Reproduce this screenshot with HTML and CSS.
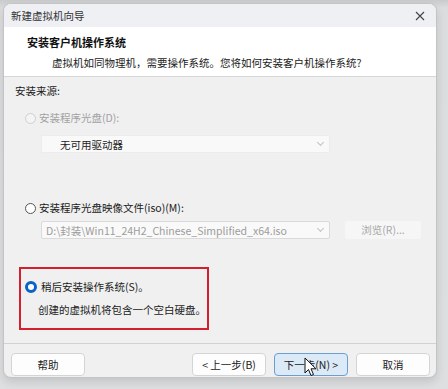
FILE: index.html
```html
<!DOCTYPE html>
<html lang="zh-CN">
<head>
  <meta charset="UTF-8" />
  <title>新建虚拟机向导</title>
  <link rel="stylesheet" href="styles.css">
</head>
<body>
  <div class="dialog">
    <div class="titlebar">
      <span class="title">新建虚拟机向导</span>
      <svg class="close" width="10" height="10" viewBox="0 0 10 10">
        <path d="M1 1 L9 9 M9 1 L1 9" stroke="#444" stroke-width="1.1" fill="none" />
      </svg>
    </div>

    <div class="header">
      <div class="header-title">安装客户机操作系统</div>
      <div class="header-sub">虚拟机如同物理机，需要操作系统。您将如何安装客户机操作系统?</div>
    </div>

    <div class="content">
      <div class="label">安装来源:</div>

      <div class="option disabled">
        <span class="radio"></span>
        <span>安装程序光盘(D):</span>
      </div>
      <div class="select select-drive">
        <span>无可用驱动器</span>
        <span class="chev"></span>
      </div>

      <div class="option option-iso">
        <span class="radio"></span>
        <span>安装程序光盘映像文件(iso)(M):</span>
      </div>
      <div class="iso-row">
        <div class="select select-iso">
          <span>D:\封装\Win11_24H2_Chinese_Simplified_x64.iso</span>
          <span class="chev"></span>
        </div>
        <div class="browse">浏览(R)...</div>
      </div>

      <div class="highlight">
        <div class="option">
          <span class="radio checked"></span>
          <span>稍后安装操作系统(S)。</span>
        </div>
        <div class="note">创建的虚拟机将包含一个空白硬盘。</div>
      </div>
    </div>

    <div class="footer">
      <button class="btn">帮助</button>
      <div class="spacer"></div>
      <button class="btn">&lt; 上一步(B)</button>
      <button class="btn btn-focus">下一步(N) &gt;</button>
      <button class="btn">取消</button>
    </div>

    <svg class="cursor" width="14" height="21" viewBox="0 0 14 21">
      <path d="M1 1 L1 16 L4.5 12.5 L7 18.5 L9.5 17.5 L7 11.8 L12 11.8 Z" fill="#fff" stroke="#111" stroke-width="1" stroke-linejoin="round" />
    </svg>
  </div>
</body>
</html>
```

FILE: styles.css
```css
html, body {
  margin: 0;
  padding: 0;
}

body {
  width: 448px;
  height: 389px;
  overflow: hidden;
  background: linear-gradient(#c9cacc, #dcdddf 8px, #dedfe1);
  font-family: "Noto Sans CJK SC", "Noto Sans", sans-serif;
  font-size: 10.5px;
  color: #1a1a1a;
  padding: 3px 0 0 3px;
  box-sizing: border-box;
}

.dialog {
  position: relative;
  width: 434px;
  height: 375px;
  box-sizing: border-box;
  background: #f0f0f0;
  border: 1px solid #c4c4c4;
  border-radius: 8px;
  overflow: hidden;
  display: flex;
  flex-direction: column;
  box-shadow: 0 4px 10px rgba(0, 0, 0, 0.12);
}

.titlebar {
  height: 23px;
  background: #eef0f4;
  display: flex;
  align-items: center;
  justify-content: space-between;
  padding: 0 8px 0 7px;
  flex-shrink: 0;
}

.title {
  font-size: 10.5px;
  color: #333;
}

.close {
  margin-right: 3px;
}

.header {
  height: 50px;
  background: #fff;
  border-bottom: 1px solid #d6d6d6;
  box-sizing: border-box;
  flex-shrink: 0;
  padding-top: 7px;
}

.header-title {
  font-weight: bold;
  font-size: 11px;
  line-height: 16px;
  padding-left: 23px;
  color: #111;
}

.header-sub {
  line-height: 16px;
  margin-top: 5px;
  padding-left: 48px;
}

.content {
  flex: 1;
  padding-top: 6px;
}

.label {
  line-height: 16px;
  padding-left: 11px;
}

.option {
  display: flex;
  align-items: center;
  gap: 3px;
  line-height: 16px;
  margin-top: 11px;
  padding-left: 21px;
  white-space: nowrap;
}

.option.disabled {
  color: #a2a2a2;
}

.option-iso {
  margin-top: 47px;
}

.radio {
  width: 9px;
  height: 9px;
  border: 1px solid #555;
  border-radius: 50%;
  background: #fff;
  flex-shrink: 0;
}

.disabled .radio {
  border-color: #cfcfcf;
  background: #f4f4f4;
}

.radio.checked {
  width: 6px;
  height: 6px;
  border: 3px solid #0a63c4;
  background: #fff;
  margin-right: 1px;
}

.select {
  height: 18px;
  box-sizing: border-box;
  background: #f9f9f9;
  border: 1px solid #ececec;
  border-radius: 2px;
  display: flex;
  align-items: center;
  justify-content: space-between;
  padding: 0 6px 0 18px;
}

.select-drive {
  margin: 9px 0 0 37px;
  width: 289px;
  color: #222;
}

.chev {
  width: 4px;
  height: 4px;
  border-right: 1px solid #c2c2c2;
  border-bottom: 1px solid #c2c2c2;
  transform: rotate(45deg);
  margin-top: -3px;
}

.iso-row {
  display: flex;
  gap: 15px;
  margin: 5px 0 0 37px;
}

.select-iso {
  width: 289px;
  color: #9c9c9c;
  border-color: #dadada;
  padding-left: 4px;
}

.browse {
  width: 76px;
  height: 18px;
  line-height: 18px;
  text-align: center;
  background: #f6f6f6;
  border-radius: 3px;
  color: #a8a8a8;
}

.highlight {
  margin: 28px 0 0 15px;
  width: 190px;
  height: 63px;
  box-sizing: border-box;
  border: 2px solid #d41f2f;
  padding-top: 10px;
}

.highlight .option {
  margin-top: 0;
  padding-left: 4px;
}

.note {
  line-height: 16px;
  margin-top: 7px;
  padding-left: 17px;
  white-space: nowrap;
}

.footer {
  border-top: 1px solid #d2d2d2;
  display: flex;
  gap: 8px;
  padding: 9px 6px 0 7px;
  height: 34px;
  box-sizing: border-box;
  flex-shrink: 0;
}

.spacer {
  flex: 1;
}

.btn {
  width: 74px;
  height: 23px;
  background: #fdfdfd;
  border: 1px solid #d4d4d4;
  border-radius: 4px;
  font-family: inherit;
  font-size: 10.5px;
  color: #1a1a1a;
  padding: 0;
}

.btn-focus {
  background: #dce9f6;
  border-color: #6a9fd2;
}

.cursor {
  position: absolute;
  left: 300px;
  top: 353px;
}
```
